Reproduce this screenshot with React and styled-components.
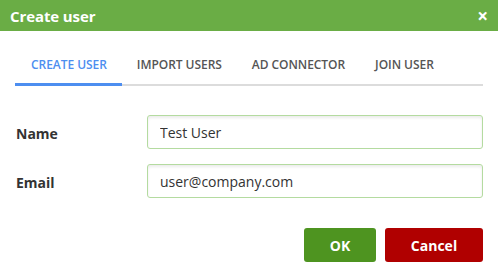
import React from "react";
import styled, { createGlobalStyle } from "styled-components";

const GlobalStyle = createGlobalStyle`
	body {
		margin: 0;
		background: #fff;
		font-family: "Open Sans", "Liberation Sans", sans-serif;
	}
`;

const Dialog = styled.div`
	width: 498px;
	height: 278px;
	background: #fff;
	display: flex;
	flex-direction: column;
`;

const Header = styled.div`
	height: 31px;
	background: #6aad45;
	display: flex;
	align-items: center;
	justify-content: space-between;
	padding: 0 10px 0 10px;
	color: #fff;
`;

const Title = styled.h1`
	margin: 0;
	font-size: 15px;
	font-weight: 700;
	letter-spacing: -0.1px;
`;

const Close = styled.span`
	font-size: 19px;
	font-weight: 700;
	line-height: 1;
	margin-top: 1px;
`;

const Tabs = styled.div`
	display: flex;
	margin: 17px 15px 0 15px;
	border-bottom: 2px solid #dcdcdc;
`;

const Tab = styled.div`
	padding: 8px 15px 10px 16px;
	font-size: 12px;
	font-weight: 600;
	letter-spacing: -0.05px;
	color: ${p => (p.active ? "#4d8ef0" : "#555")};
	margin-bottom: -2px;
	border-bottom: 3px solid ${p => (p.active ? "#4d8ef0" : "transparent")};
	white-space: nowrap;
	& + & {
		padding-left: 15px;
	}
`;

const Form = styled.div`
	display: flex;
	flex-direction: column;
	gap: 15px;
	padding: 29px 15px 0 16px;
`;

const Row = styled.div`
	display: flex;
	align-items: center;
`;

const Label = styled.label`
	width: 131px;
	font-size: 14px;
	font-weight: 700;
	color: #333;
	padding-top: 2px;
`;

const Input = styled.input`
	flex: 1;
	height: 34px;
	box-sizing: border-box;
	border: 1px solid #b4dba0;
	border-radius: 3px;
	padding: 0 12px;
	font-family: inherit;
	font-size: 14px;
	color: #333;
	box-shadow: inset 0 2px 3px rgba(0, 0, 0, 0.08);
	outline: none;
`;

const Footer = styled.div`
	display: flex;
	justify-content: flex-end;
	gap: 9px;
	padding: 30px 15px 0 0;
`;

const Button = styled.button`
	height: 34px;
	width: ${p => p.w}px;
	border: none;
	border-radius: 3px;
	background: ${p => p.bg};
	color: #fff;
	font-family: inherit;
	font-size: 14px;
	font-weight: 700;
	cursor: pointer;
`;

export default function App() {
	return (
		<>
			<GlobalStyle />
			<Dialog>
				<Header>
					<Title>Create user</Title>
					<Close>×</Close>
				</Header>
				<Tabs>
					<Tab active>CREATE USER</Tab>
					<Tab>IMPORT USERS</Tab>
					<Tab>AD CONNECTOR</Tab>
					<Tab>JOIN USER</Tab>
				</Tabs>
				<Form>
					<Row>
						<Label>Name</Label>
						<Input defaultValue="Test User" />
					</Row>
					<Row>
						<Label>Email</Label>
						<Input defaultValue="user@company.com" />
					</Row>
				</Form>
				<Footer>
					<Button w={72} bg="#4e9420">OK</Button>
					<Button w={98} bg="#b00000">Cancel</Button>
				</Footer>
			</Dialog>
		</>
	);
}
